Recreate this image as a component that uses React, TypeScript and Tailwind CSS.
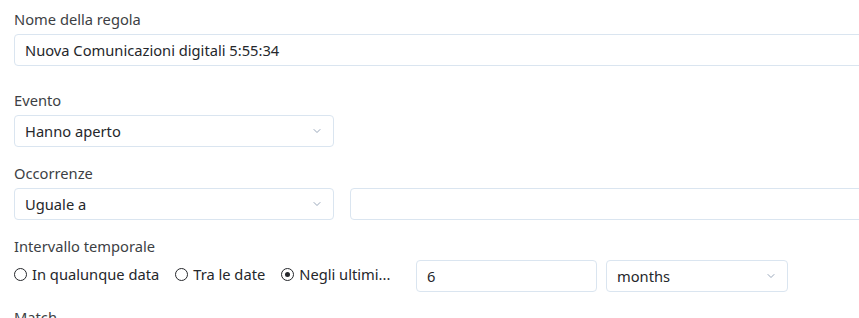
import { ChevronDown } from 'lucide-react';

const font = { fontFamily: '"Noto Sans", "Open Sans", sans-serif' };

function Label({ children }: { children: React.ReactNode }) {
  return <div className="text-[14.7px] leading-5 text-[#3d3f44] mb-[5px]">{children}</div>;
}

function Select({ value, className = '' }: { value: string; className?: string }) {
  return (
    <div
      className={`flex items-center justify-between h-8 rounded-[4px] border border-[#dae5f0] bg-white pl-[10px] pr-[10px] ${className}`}
    >
      <span className="text-[14.7px] text-[#25272b]">{value}</span>
      <ChevronDown className="w-[12px] h-[12px] text-[#7f91a8]" strokeWidth={1.6} />
    </div>
  );
}

function Radio({ label, checked }: { label: string; checked?: boolean }) {
  return (
    <label className="flex items-center gap-[5px] text-[14.7px] text-[#25272b]">
      <span className="flex items-center justify-center w-[13px] h-[13px] rounded-full border-[1.5px] border-[#25272b]">
        {checked && <span className="w-[5px] h-[5px] rounded-full bg-[#25272b]" />}
      </span>
      {label}
    </label>
  );
}

export default function App() {
  return (
    <div className="w-full h-[318px] overflow-hidden bg-white" style={font}>
      <div className="w-[1000px] pl-[14px] pt-[9px]">
        {/* Nome della regola */}
        <div className="mb-[24px]">
          <Label>Nome della regola</Label>
          <div className="flex items-center h-8 rounded-[4px] border border-[#dae5f0] pl-[10px] text-[14.7px] text-[#25272b]">
            Nuova Comunicazioni digitali 5:55:34
          </div>
        </div>

        {/* Evento */}
        <div className="mb-4">
          <Label>Evento</Label>
          <Select value="Hanno aperto" className="w-[320px]" />
        </div>

        {/* Occorrenze */}
        <div className="mb-4">
          <Label>Occorrenze</Label>
          <div className="flex gap-[16px]">
            <Select value="Uguale a" className="w-[320px]" />
            <div className="h-8 flex-1 rounded-[4px] border border-[#dae5f0]" />
          </div>
        </div>

        {/* Intervallo temporale */}
        <div className="mb-[15px]">
          <div className="text-[14.7px] leading-5 text-[#3d3f44] mb-1">Intervallo temporale</div>
          <div className="flex items-center">
            <div className="flex items-center gap-4 w-[402px] -mt-[3px]">
              <Radio label="In qualunque data" />
              <Radio label="Tra le date" />
              <Radio label="Negli ultimi..." checked />
            </div>
            <div className="flex items-center h-8 w-[181px] rounded-[4px] border border-[#dae5f0] pl-[10px] text-[14.7px] text-[#25272b]">
              6
            </div>
            <Select value="months" className="w-[182px] ml-[9px]" />
          </div>
        </div>

        <Label>Match</Label>
      </div>
    </div>
  );
}
